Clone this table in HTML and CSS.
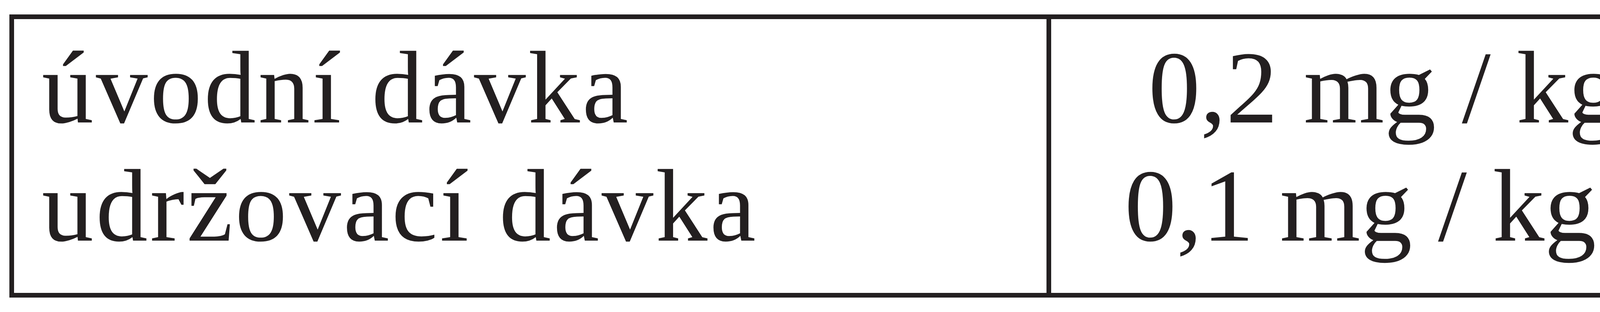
FILE: index.html
```html
<!DOCTYPE html>
<html lang="cs">
<head>
<meta charset="utf-8">
<title>Dávkování</title>
<link rel="stylesheet" href="styles.css">
</head>
<body>
<div class="dose-table">
  <div class="cell cell-label">
    <div class="line">úvodní dávka</div>
    <div class="line">udržovací dávka</div>
  </div>
  <div class="cell cell-value">
    <div class="line value-first">0,2 mg / kg / d</div>
    <div class="line value-second">0,1 mg / kg / d</div>
  </div>
</div>
</body>
</html>
```

FILE: styles.css
```css
html, body {
  margin: 0;
  padding: 0;
  background: #ffffff;
}

body {
  padding: 37px 0 0 24px;
  font-family: "Liberation Serif", "Times New Roman", serif;
  color: #231f20;
}

.dose-table {
  display: grid;
  grid-template-columns: 2655px 1fr;
  width: 6813px;
  height: 726px;
  box-sizing: border-box;
  border: 12px solid #231f20;
}

.cell {
  padding-top: 24px;
  font-size: 265px;
  line-height: 303px;
}

.line {
  white-space: nowrap;
}

.cell-label {
  border-right: 12px solid #231f20;
  padding-left: 71px;
  letter-spacing: 6px;
}

.value-first {
  padding-left: 249px;
}

.value-second {
  padding-left: 188px;
}
```
